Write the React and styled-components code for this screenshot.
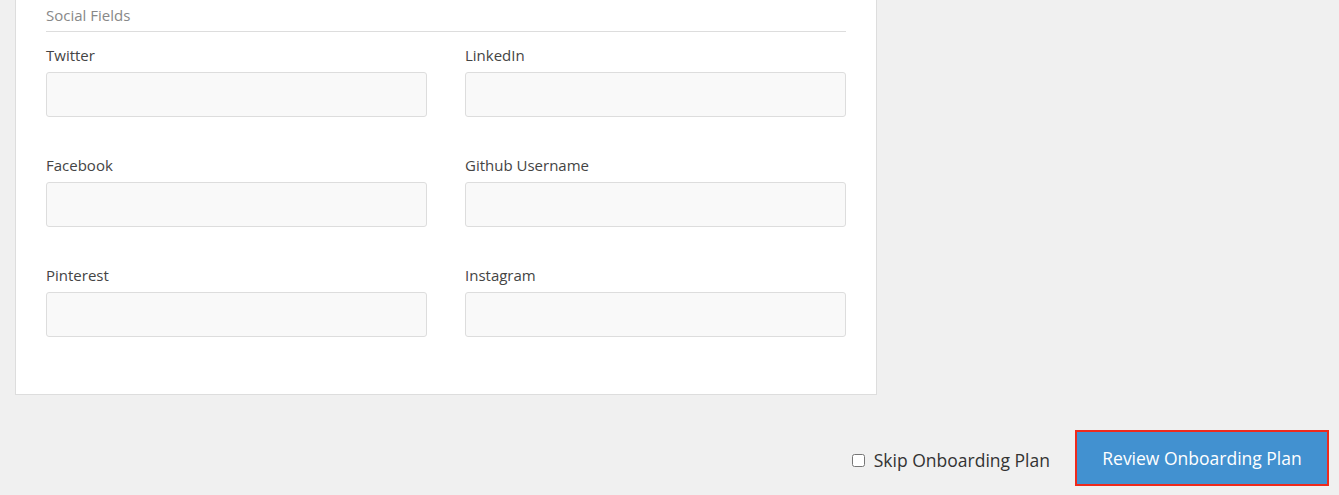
import React from 'react';
import styled, { createGlobalStyle } from 'styled-components';

const GlobalStyle = createGlobalStyle`
  body {
    margin: 0;
    background: #f0f0f0;
    font-family: "Open Sans", "Liberation Sans", sans-serif;
  }
`

const Page = styled.div`
  padding: 0 10px 0 15px;
`
const Card = styled.div`
  width: 800px;
  background: #fff;
  border: 1px solid #ddd;
  border-top: none;
  padding: 0 30px 57px 30px;
`
const Legend = styled.div`
  font-size: 15px;
  line-height: 20px;
  color: #888;
  padding: 5px 0 6px 0;
  border-bottom: 1px solid #ddd;
`
const Fields = styled.div`
  display: grid;
  grid-template-columns: 381px 381px;
  column-gap: 38px;
  row-gap: 38px;
  margin-top: 13px;
`
const Field = styled.div`
  display: flex;
  flex-direction: column;
  gap: 7px;
`
const Label = styled.label`
  font-size: 15px;
  line-height: 20px;
  color: #444;
`
const Input = styled.input`
  box-sizing: border-box;
  height: 45px;
  width: 100%;
  background: #f9f9f9;
  border: 1px solid #ddd;
  border-radius: 3px;
  padding: 0 12px;
  font-family: inherit;
  font-size: 15px;
`
const Footer = styled.div`
  display: flex;
  justify-content: flex-end;
  align-items: center;
  gap: 25px;
  margin-top: 35px;
`
const Skip = styled.label`
  display: flex;
  align-items: center;
  gap: 9px;
  font-size: 17.5px;
  color: #333;
  margin-top: 4px;
`
const Check = styled.input`
  margin: 0;
  width: 13px;
  height: 13px;
`
const Button = styled.button`
  box-sizing: border-box;
  width: 254px;
  height: 56px;
  background: #4291d0;
  border: 2px solid #ef2a1c;
  color: #fff;
  font-family: inherit;
  font-size: 17.5px;
  cursor: pointer;
`

const fields = [
  ['Twitter', 'LinkedIn'],
  ['Facebook', 'Github Username'],
  ['Pinterest', 'Instagram'],
]

const App = () => {
  return (
    <Page>
      <GlobalStyle />
      <Card>
        <Legend>Social Fields</Legend>
        <Fields>
          {fields.flat().map((name) => (
            <Field key={name}>
              <Label>{name}</Label>
              <Input type="text" />
            </Field>
          ))}
        </Fields>
      </Card>
      <Footer>
        <Skip>
          <Check type="checkbox" />
          Skip Onboarding Plan
        </Skip>
        <Button>Review Onboarding Plan</Button>
      </Footer>
    </Page>
  )
}

export default App
